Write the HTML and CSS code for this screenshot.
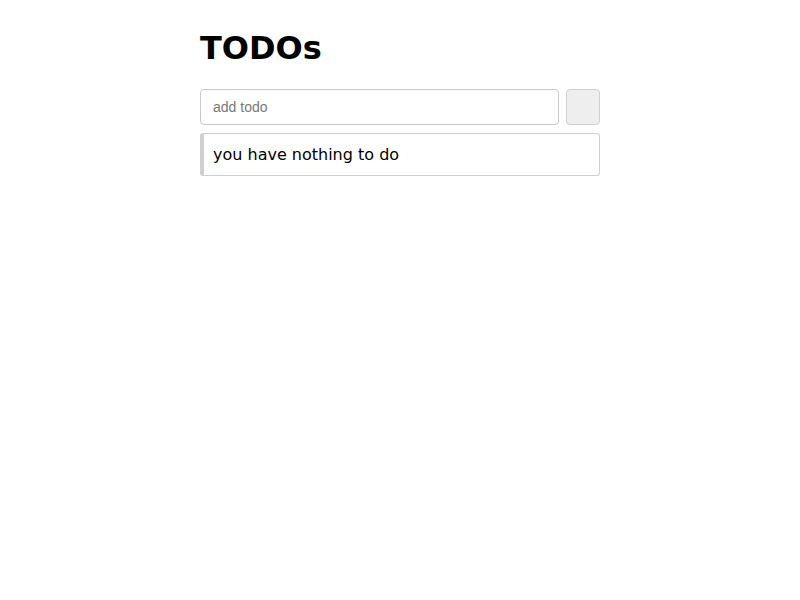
FILE: index.html
```html
<!DOCTYPE html>
<html>
<head>
<meta charset="utf-8">
<link rel="stylesheet" href="styles.css">
</head>
<body>
<div class="app">
  <h1 class="title">TODOs</h1>
  <form class="add-form">
    <input class="add-input" type="text" placeholder="add todo">
    <button class="add-btn" type="button"></button>
  </form>
  <ul class="todo-list">
    <li class="todo-item">you have nothing to do</li>
  </ul>
</div>
</body>
</html>
```
FILE: styles.css
```css
body {
  margin: 0;
  font-family: "DejaVu Sans", sans-serif;
  background: #fff;
  color: #000;
}
.app {
  width: 400px;
  margin: 0 auto;
  padding-top: 29px;
}
.title {
  margin: 0 0 22px 0;
  font-size: 32px;
  font-weight: bold;
  line-height: 38px;
}
.add-form {
  display: flex;
  gap: 7px;
  margin: 0 0 8px 0;
}
.add-input {
  flex: 1;
  height: 36px;
  box-sizing: border-box;
  border: 1px solid #c8c8c8;
  border-radius: 4px;
  padding: 0 12px;
  font-family: "Liberation Sans", Arial, sans-serif;
  font-size: 14px;
  outline: none;
}
.add-input::placeholder {
  color: #777;
}
.add-btn {
  width: 34px;
  height: 36px;
  box-sizing: border-box;
  border: 1px solid #cfcfcf;
  border-radius: 4px;
  background: #eee;
  padding: 0;
}
.todo-list {
  list-style: none;
  margin: 0;
  padding: 0;
}
.todo-item {
  box-sizing: border-box;
  height: 43px;
  border: 1px solid #cfcfcf;
  border-left: 4px solid #cfcfcf;
  border-radius: 3px;
  padding: 0 9px;
  display: flex;
  align-items: center;
  font-size: 16px;
}
```
